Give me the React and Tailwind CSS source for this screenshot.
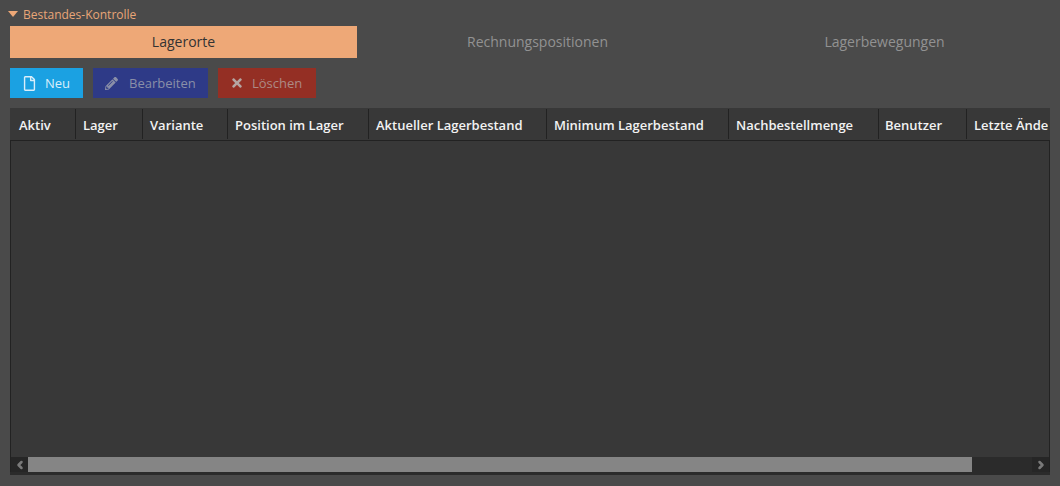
import { ChevronLeft, ChevronRight } from 'lucide-react';
import { FaPencilAlt, FaTimes, FaRegFile } from 'react-icons/fa';

const TABS = [
  ['Lagerorte', 'mr-[7px] bg-[#eea877] text-[#333333]'],
  ['Rechnungspositionen', 'text-[#929292]'],
  ['Lagerbewegungen', 'text-[#929292]'],
];

const COLUMNS = [
  ['Aktiv', 'w-[66px] pl-[9px]'],
  ['Lager', 'w-[67px] pl-[7px]'],
  ['Variante', 'w-[85px] pl-[7px]'],
  ['Position im Lager', 'w-[141px] pl-[7px]'],
  ['Aktueller Lagerbestand', 'w-[178px] pl-[7px]'],
  ['Minimum Lagerbestand', 'w-[182px] pl-[7px]'],
  ['Nachbestellmenge', 'w-[150px] pl-[7px]'],
  ['Benutzer', 'w-[88px] pl-[6px]'],
  ['Letzte Änderung', 'w-[120px] pl-[7px]'],
];

function ToolButton({ icon, label, className }) {
  return (
    <button className={`flex h-[30px] items-center pl-[12px] text-[13px] ${className}`}>
      {icon}
      <span className="pt-[1px]">{label}</span>
    </button>
  );
}

export default function App() {
  return (
    <div className="flex h-[486px] w-[1060px] flex-col overflow-hidden bg-[#4a4a4a] px-[10px] font-['Open_Sans',sans-serif]">
      {/* Section title */}
      <div className="flex h-[26px] items-center pt-[4px] text-[12px] text-[#e8a678]">
        <svg width="10" height="6" viewBox="0 0 10 6" className="mr-[5px] -ml-[2px] mb-[2px]">
          <path d="M0 0h10L5 6z" fill="#eea877" />
        </svg>
        Bestandes-Kontrolle
      </div>

      {/* Tabs */}
      <div className="flex h-[32px] shrink-0">
        {TABS.map(([tab, style]) => (
          <div
            key={tab}
            className={`flex w-[347px] shrink-0 items-center justify-center pb-[1px] text-[14px] ${style}`}
          >
            {tab}
          </div>
        ))}
      </div>

      {/* Toolbar */}
      <div className="mt-[10px] flex gap-[10px]">
        <ToolButton
          className="w-[73px] bg-[#1ba1e2] text-[#d9eefa]"
          icon={<FaRegFile className="mr-[8px] text-[15px] text-[#d9eefa]" />}
          label="Neu"
        />
        <ToolButton
          className="w-[115px] bg-[#2e3a87] text-[#8a8fa8]"
          icon={<FaPencilAlt className="mr-[11px] text-[13px] text-[#8a8fa8]" />}
          label="Bearbeiten"
        />
        <ToolButton
          className="w-[98px] bg-[#942f24] text-[#ad8a84]"
          icon={<FaTimes className="mr-[8px] text-[14px] text-[#b5a5a2]" />}
          label="Löschen"
        />
      </div>

      {/* Table */}
      <div className="mt-[10px] flex h-[367px] w-[1040px] flex-col bg-[#383838]">
        <div className="flex h-[32px] w-[1038px] shrink-0 overflow-hidden pt-[1px]">
          {COLUMNS.map(([name, width], i) => (
            <div
              key={name}
              className={`flex h-[30px] shrink-0 items-center overflow-hidden whitespace-nowrap pt-[3px] text-[13px] font-semibold text-[#f2f2f2] ${width} ${
                i < COLUMNS.length - 1 ? 'border-r border-[#222222]' : ''
              }`}
            >
              {name}
            </div>
          ))}
        </div>

        <div className="flex min-h-0 flex-1 flex-col justify-end border-x border-t border-[#222222]">
          <div className="flex h-[15px] bg-[#2b2b2b]">
            <div className="flex w-[17px] items-center justify-center bg-[#262626]">
              <ChevronLeft size={12} strokeWidth={5} className="text-[#7a7a7a]" />
            </div>
            <div className="w-[944px] bg-[#858585]" />
            <div className="flex-1" />
            <div className="flex w-[17px] items-center justify-center bg-[#262626]">
              <ChevronRight size={12} strokeWidth={5} className="text-[#7a7a7a]" />
            </div>
          </div>
        </div>
        <div className="h-[3px] shrink-0 bg-[#2b2b2b]" />
      </div>
    </div>
  );
}
